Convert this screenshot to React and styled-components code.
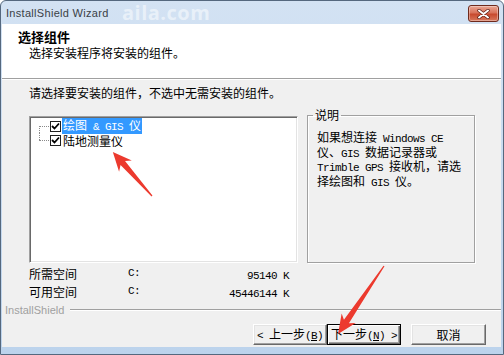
import React from "react";
import styled, { createGlobalStyle } from "styled-components";

const GlobalStyle = createGlobalStyle`
  html, body { margin: 0; padding: 0; background: #fff; }
  body {
    font-family: "Noto Sans CJK SC", "Liberation Sans", sans-serif;
    font-size: 12px;
    color: #000;
  }
  * { box-sizing: border-box; }
`;

// Win7 basic frame
const Window = styled.div`
  position: relative;
  width: 504px;
  height: 355px;
  display: flex;
  flex-direction: column;
  background: linear-gradient(#d3e2f3, #bcd3ec);
  border: 1px solid #55687e;
  border-radius: 6px 6px 0 0;
  overflow: hidden;
`;

const TitleBar = styled.div`
  height: 23px;
  display: flex;
  align-items: flex-start;
  justify-content: space-between;
  padding: 4px 4px 0 5px;
  position: relative;
`;

const TitleText = styled.span`
  font-family: "Liberation Sans", sans-serif;
  font-size: 11px;
  line-height: 14px;
  color: #3a3f46;
  margin-top: 1px;
  letter-spacing: 0.3px;
`;

const Watermark = styled.span`
  position: absolute;
  left: 121px;
  top: -2px;
  font-family: "Open Sans", "Liberation Sans", sans-serif;
  font-weight: 700;
  font-size: 20px;
  color: rgba(255, 255, 255, 0.5);
  letter-spacing: 0.5px;
`;

const CloseButton = styled.div`
  width: 31px;
  height: 17px;
  border: 1px solid #6e2a1d;
  border-radius: 3px;
  background: linear-gradient(#e9a694, #d9735b 45%, #c84a2f 55%, #d8785c);
  box-shadow: inset 0 0 0 1px rgba(255, 255, 255, 0.35);
  display: flex;
  align-items: center;
  justify-content: center;
`;

const Client = styled.div`
  flex: 1;
  margin: 0 2px 7px 1px;
  background: #f0f0f0;
  display: flex;
  flex-direction: column;
`;

const Header = styled.header`
  height: 55px;
  background: #fff;
  padding: 5px 0 0 16px;
  border-bottom: 1px solid #a0a0a0;
`;

const HeaderTitle = styled.div`
  font-weight: 700;
  font-size: 13px;
  line-height: 16px;
`;

const HeaderSub = styled.div`
  margin-left: 11px;
  line-height: 16px;
`;

const Body = styled.div`
  border-top: 1px solid #fff;
  padding: 6px 0 0 27px;
`;

const Instruction = styled.div`
  line-height: 14px;
`;

const Row = styled.div`
  display: flex;
  align-items: flex-end;
  gap: 9px;
  margin-top: 8px;
`;

const TreeBox = styled.div`
  width: 269px;
  height: 147px;
  background: #fff;
  border: 1px solid;
  border-color: #a0a0a0 #fff #fff #a0a0a0;
  box-shadow: inset 1px 1px #696969, inset -1px -1px #e3e3e3;
  padding: 2px 0 0 9px;
`;

const TreeItem = styled.div`
  display: flex;
  align-items: center;
  height: 14px;
`;

const Connector = styled.span`
  position: relative;
  width: 11px;
  height: 14px;
  &::before {
    content: "";
    position: absolute;
    left: 0;
    right: 1px;
    top: 7px;
    border-top: 1px dotted #8a8a8a;
  }
  &::after {
    content: "";
    position: absolute;
    left: 0;
    top: ${(p) => (p.$last ? "0" : "7px")};
    height: 7px;
    border-left: 1px dotted #8a8a8a;
  }
`;

const CheckBox = styled.span`
  width: 11px;
  height: 11px;
  border: 1px solid #1f1f1f;
  background: #fff;
  display: flex;
  align-items: center;
  justify-content: center;
`;

const Label = styled.span`
  margin-left: 1px;
  padding: 0 1px;
  line-height: 13px;
  white-space: nowrap;
  background: ${(p) => (p.$selected ? "#3399ff" : "transparent")};
  color: ${(p) => (p.$selected ? "#fff" : "#000")};
`;

const Mono = styled.span`
  font-family: "Liberation Mono", monospace;
  font-size: 11px;
  letter-spacing: -0.6px;
`;

const GroupBox = styled.fieldset`
  width: 168px;
  height: 155px;
  margin: 0;
  padding: 0 4px 0 5px;
  border: 1px solid #a0a0a0;
  box-shadow: inset 1px 1px #fff, 1px 1px #fff;
`;

const Legend = styled.legend`
  padding: 0 2px;
  line-height: 14px;
`;

const Description = styled.div`
  margin-top: 9px;
  padding-left: 4px;
  line-height: 12.5px;
  white-space: nowrap;
`;

const SpaceGrid = styled.div`
  display: grid;
  grid-template-columns: 99px 60px 101px;
  margin-top: 3px;
  line-height: 15px;
`;

const Value = styled.span`
  text-align: right;
`;

const Divider = styled.div`
  display: flex;
  align-items: center;
  height: 13px;
  margin-top: 1px;
  padding-left: 3px;
`;

const BrandText = styled.span`
  font-family: "Liberation Sans", sans-serif;
  font-size: 11px;
  color: #a0a0a0;
`;

const EtchedLine = styled.span`
  flex: 1;
  margin-left: 6px;
  height: 2px;
  border-top: 1px solid #a0a0a0;
  border-bottom: 1px solid #fff;
`;

const ButtonRow = styled.div`
  display: flex;
  justify-content: flex-end;
  margin-top: 8px;
  padding-right: 15px;
`;

const Button = styled.button`
  width: ${(p) => p.$w || 74}px;
  height: 21px;
  margin-left: ${(p) => p.$gap || 0}px;
  padding: 0;
  font-family: inherit;
  font-size: 12px;
  line-height: 14px;
  color: #000;
  background: #f0f0f0;
  border: 1px solid;
  border-color: ${(p) => (p.$default ? "#000" : "#fff #696969 #696969 #fff")};
  box-shadow: ${(p) =>
    p.$default
      ? "inset 1px 1px #fff, inset -1px -1px #696969, inset -2px -2px #a0a0a0"
      : "inset -1px -1px #a0a0a0, inset 1px 1px #e3e3e3"};
  white-space: nowrap;
`;

const Overlay = styled.svg`
  position: absolute;
  left: 0;
  top: 0;
  pointer-events: none;
`;

const Check = () => (
  <svg width="9" height="9" viewBox="0 0 9 9">
    <path d="M1 4 L3.5 6.5 L8 1.5" fill="none" stroke="#000" strokeWidth="1.8" />
  </svg>
);

const Arrow = ({ x, y, len, angle }) => (
  <path
    transform={`translate(${x} ${y}) rotate(${angle})`}
    d={`M0 -0.6 L${len - 15} -3 L${len - 19} -8.5 L${len} 0 L${len - 19} 8.5 L${len - 15} 3 L0 0.6 Z`}
    fill="#ec3a2e"
  />
);

const items = [
  { id: 1, label: <>绘图<Mono> &amp; GIS </Mono>仪</>, selected: true },
  { id: 2, label: "陆地测量仪" },
];

export default function App() {
  return (
    <Window>
      <GlobalStyle />
      <TitleBar>
        <TitleText>InstallShield Wizard</TitleText>
        <Watermark>aila.com</Watermark>
        <CloseButton>
          <svg width="13" height="10" viewBox="0 0 13 10">
            <path d="M2 1.5 L11 8.5 M11 1.5 L2 8.5" stroke="#5a1d12" strokeWidth="3.4" strokeLinecap="round" />
            <path d="M2 1.5 L11 8.5 M11 1.5 L2 8.5" stroke="#fff" strokeWidth="2" strokeLinecap="round" />
          </svg>
        </CloseButton>
      </TitleBar>
      <Client>
        <Header>
          <HeaderTitle>选择组件</HeaderTitle>
          <HeaderSub>选择安装程序将安装的组件。</HeaderSub>
        </Header>
        <Body>
          <Instruction>请选择要安装的组件，不选中无需安装的组件。</Instruction>
          <Row>
            <TreeBox>
              {items.map((it, i) => (
                <TreeItem key={it.id}>
                  <Connector $last={i === items.length - 1} />
                  <CheckBox><Check /></CheckBox>
                  <Label $selected={it.selected}>{it.label}</Label>
                </TreeItem>
              ))}
            </TreeBox>
            <GroupBox>
              <Legend>说明</Legend>
              <Description>
                <div>如果想连接<Mono> Windows CE</Mono></div>
                <div>仪、<Mono>GIS </Mono>数据记录器或</div>
                <div><Mono>Trimble GPS </Mono>接收机，请选</div>
                <div>择绘图和<Mono> GIS </Mono>仪。</div>
              </Description>
            </GroupBox>
          </Row>
          <SpaceGrid>
            <span>所需空间</span>
            <Mono>C:</Mono>
            <Value><Mono>95140 K</Mono></Value>
            <span>可用空间</span>
            <Mono>C:</Mono>
            <Value><Mono>45446144 K</Mono></Value>
          </SpaceGrid>
        </Body>
        <Divider>
          <BrandText>InstallShield</BrandText>
          <EtchedLine />
        </Divider>
        <ButtonRow>
          <Button><Mono>&lt; </Mono>上一步<Mono>(<u>B</u>)</Mono></Button>
          <Button $default>下一步<Mono>(<u>N</u>) &gt;</Mono></Button>
          <Button $w={75} $gap={10}>取消</Button>
        </ButtonRow>
      </Client>
      <Overlay width="504" height="355">
        <Arrow x={151} y={195} len={59} angle={-131.6} />
        <Arrow x={383} y={265} len={82} angle={124.1} />
      </Overlay>
    </Window>
  );
}
